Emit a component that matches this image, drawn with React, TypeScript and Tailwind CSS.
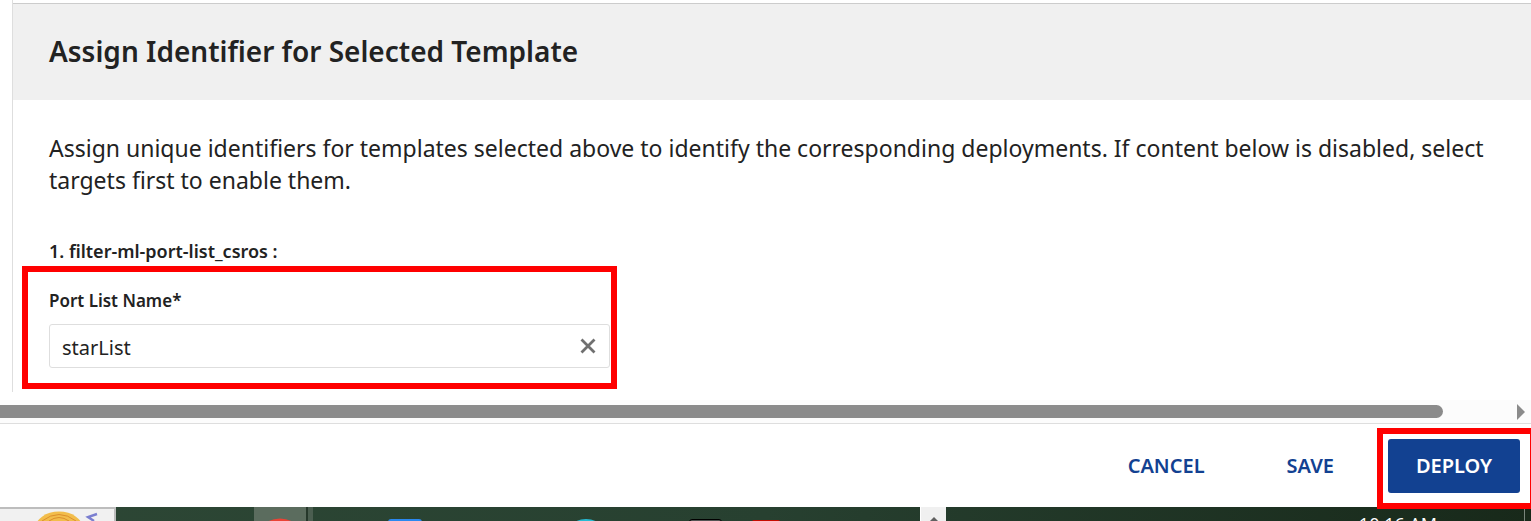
import React, { useState } from 'react'

interface HighlightProps {
  className?: string
}

function Highlight({ className = '' }: HighlightProps) {
  return (
    <div
      aria-hidden="true"
      className={`pointer-events-none absolute z-10 border-[6px] border-[#ff0000] ${className}`}
    />
  )
}

function IdentifierField() {
  const [value, setValue] = useState('starList')

  return (
    <div className="ml-[9px] max-w-[595px] border-[6px] border-[#ff0000] pt-[17px] pr-px pb-[15px] pl-[21px]">
      <label
        htmlFor="port-list-name"
        className="block text-[17px] leading-6 font-semibold"
      >
        Port List Name*
      </label>
      <div className="mt-[11px] flex h-11 items-center rounded-[3px] border border-[#dedede] pr-[11px]">
        <input
          id="port-list-name"
          type="text"
          value={value}
          onChange={(e) => setValue(e.target.value)}
          className="h-full min-w-0 flex-1 pt-0.5 pl-3 text-xl outline-none"
        />
        <button type="button" aria-label="Clear" onClick={() => setValue('')}>
          <svg
            className="size-5"
            viewBox="0 0 20 20"
            fill="none"
            stroke="#707070"
            strokeWidth="2.8"
          >
            <path d="M3.5 3.5l13 13M16.5 3.5l-13 13" />
          </svg>
        </button>
      </div>
    </div>
  )
}

function IdentifierSection() {
  return (
    <section className="ml-3 border-l border-[#dedede] pt-[3px] pb-[3px]">
      <header className="border-t border-[#cccccc] bg-[#f0f0f0] px-9 pt-[27px] pb-[29px]">
        <h2 className="text-[28px] leading-10 font-semibold">
          Assign Identifier for Selected Template
        </h2>
      </header>
      <p className="mt-8 px-9 text-[23px] leading-8">
        Assign unique identifiers for templates selected above to identify the
        corresponding deployments. If content below is disabled, select targets
        first to enable them.
      </p>
      <h3 className="mt-[43px] mb-[3px] px-9 text-lg leading-6 font-semibold">
        1. filter-ml-port-list_csros :
      </h3>
      <IdentifierField />
    </section>
  )
}

function ScrollTrack() {
  return (
    <div className="mt-2 flex h-6 items-center justify-between border-b border-[#dedede] bg-[#fcfcfc] pr-[6px]">
      <div className="h-[13px] w-[94.6%] rounded-r-full bg-[#8b8b8b]" />
      <svg className="h-4 w-2" viewBox="0 0 8 16" fill="#8b8b8b">
        <path d="M0 0l8 8-8 8z" />
      </svg>
    </div>
  )
}

function Actions() {
  return (
    <footer className="flex h-[83px] items-start justify-end pt-[15px] pr-[11px] text-xl font-semibold text-[#124191]">
      <button type="button" className="mr-0.5 h-[54px] px-10">
        CANCEL
      </button>
      <button type="button" className="mr-[14px] h-[54px] px-10">
        SAVE
      </button>
      <div className="relative">
        <button
          type="button"
          className="h-[54px] w-[132px] rounded-[3px] bg-[#124191] text-white"
        >
          DEPLOY
        </button>
        <Highlight className="-top-[11px] -right-4 -bottom-4 -left-[11px]" />
      </div>
    </footer>
  )
}

function Taskbar() {
  return (
    <div className="flex h-[14px] overflow-hidden bg-linear-to-r from-[#2d4735] via-[#274030] to-[#18291a]">
      <div className="w-[116px] shrink-0 border-t-2 border-r-2 border-[#bdbdbd] bg-[#f1f1f1]">
        <svg className="h-3 w-full" viewBox="0 0 114 12">
          <ellipse cx="59" cy="20" rx="24" ry="17.5" fill="#f2bd4b" />
          <path
            d="M42 12q17-13 34 0M49 12q10-7 20 0"
            fill="none"
            stroke="#dc8e2d"
            strokeWidth="1"
          />
          <path
            d="M97 5l-9 3 6 4"
            fill="none"
            stroke="#7b7fd0"
            strokeWidth="2.4"
          />
        </svg>
      </div>
      <div className="ml-[138px] flex w-[59px] shrink-0 bg-[#4b5e50]">
        <div className="flex w-[54px] items-end justify-center border-r-2 border-[#26382b] bg-[#5b6c5e]">
          <svg className="h-[3px] w-6" viewBox="0 0 24 3">
            <ellipse cx="12" cy="12" rx="18" ry="11.5" fill="#ea4335" />
          </svg>
        </div>
      </div>
      <div className="mt-3 ml-[75px] h-2 w-[34px] shrink-0 rounded-t-[3px] bg-[#2b88f0]" />
      <svg className="mt-3 ml-[154px] h-[2px] w-5 shrink-0" viewBox="0 0 20 2">
        <ellipse cx="10" cy="12" rx="17" ry="12" fill="#27bcd4" />
      </svg>
      <div className="mt-3 ml-[93px] h-2 w-[33px] shrink-0 rounded-t-[3px] border border-black bg-[#555555]" />
      <div className="mt-[13px] ml-[30px] h-2 w-7 shrink-0 rounded-t-[2px] bg-[#c60c00]" />
      <div className="ml-[140px] flex w-[26px] shrink-0 justify-center border-l border-white bg-[#f0f0f0]">
        <svg className="mt-[10px] h-1 w-2" viewBox="0 0 8 4" fill="#606060">
          <path d="M4 0l4 4H0z" />
        </svg>
      </div>
      <div className="ml-auto pt-[5px] pr-[87px] font-['Open_Sans',sans-serif] text-lg leading-6 whitespace-nowrap text-white">
        10:16 AM
      </div>
      <div className="mt-[2px] mr-[6px] w-px shrink-0 bg-[#7a857b]" />
    </div>
  )
}

export default function App() {
  return (
    <main className="overflow-hidden bg-white font-['Noto_Sans',sans-serif] text-[#222222]">
      <IdentifierSection />
      <ScrollTrack />
      <Actions />
      <Taskbar />
    </main>
  )
}
